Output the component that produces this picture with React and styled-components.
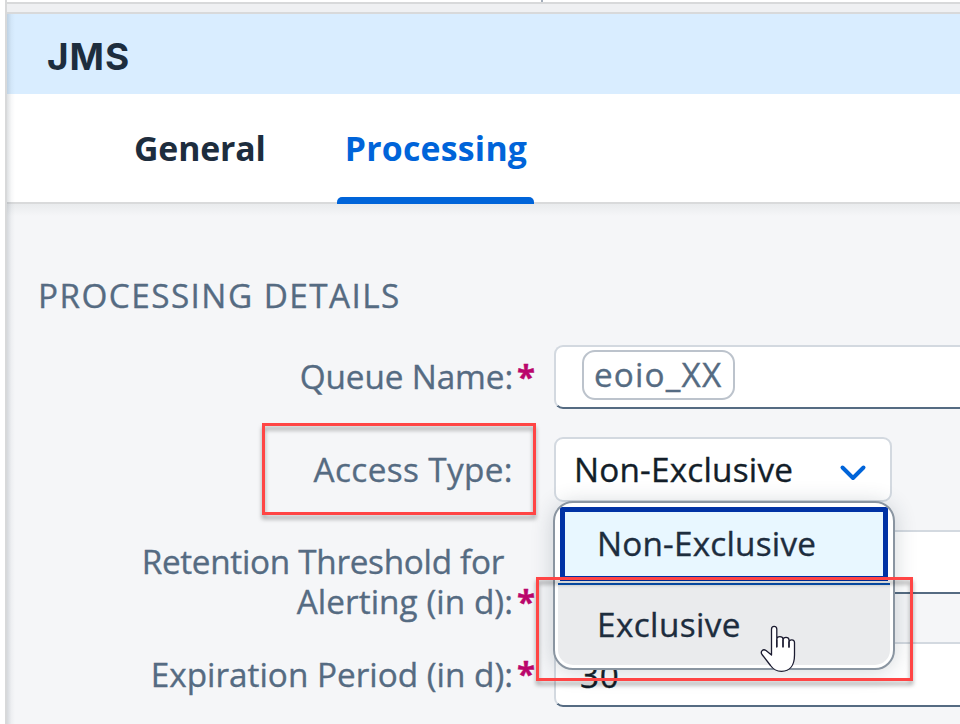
import React from 'react';
import styled, { createGlobalStyle } from 'styled-components';

const GlobalStyle = createGlobalStyle`
  * { box-sizing: border-box; }
  body {
    margin: 0;
    overflow: hidden;
    background: #fff;
    color: #556b82;
    font: 400 33.3px/40px "Open Sans", "Noto Sans", sans-serif;
    -webkit-text-stroke: 0.35px currentColor;
    white-space: nowrap;
  }
`;

const Page = styled.div`
  position: relative;
  display: flex;
  width: 960px;
  height: 724px;
  overflow: hidden;
  background: #fff;
`;

const Gutter = styled.div`
  flex: none;
  width: 7px;
  border-right: 2px solid #d8d9da;
`;

const Panel = styled.main`
  position: relative;
  flex: none;
  width: 953px;
  display: flex;
  flex-direction: column;
  &::before {
    content: '';
    position: absolute;
    z-index: 1;
    inset: 14px auto 0 0;
    width: 8px;
    background: linear-gradient(90deg, rgba(60, 75, 90, 0.17), rgba(60, 75, 90, 0.04) 55%, transparent);
  }
`;

const CanvasEdge = styled.div`
  flex: none;
  height: 2px;
  padding-left: 534px;
  &::before {
    content: '';
    display: block;
    width: 2px;
    height: 2px;
    background: #a3adba;
  }
`;

const Splitter = styled.div`
  flex: none;
  height: 12px;
  border: solid #d8d9da;
  border-width: 2px 0;
  background: #eff0f2;
`;

const TitleBar = styled.header`
  flex: none;
  height: 80px;
  padding: 0 40px;
  background: #d9edff;
`;

const Title = styled.h1`
  margin: 0;
  color: #1d2d3e;
  font: 700 37px/86px Inter, sans-serif;
  letter-spacing: 0.9px;
  -webkit-text-stroke: 0;
`;

const TabBar = styled.nav`
  flex: none;
  display: flex;
  gap: 64px;
  height: 110px;
  padding-left: 119px;
  border-bottom: 2px solid #d9dadb;
  background: #fff;
`;

const Tab = styled.div`
  position: relative;
  height: 108px;
  padding: 0 7px 0 8px;
  font-weight: 700;
  font-size: 33.8px;
  line-height: 109px;
  letter-spacing: ${(p) => p.$spacing}px;
  -webkit-text-stroke: 0;
  color: ${(p) => (p.$active ? '#0064d9' : '#1d2d3e')};
  &::after {
    content: '';
    display: ${(p) => (p.$active ? 'block' : 'none')};
    position: absolute;
    left: 0;
    bottom: -2px;
    width: 197px;
    height: 7px;
    border-radius: 5px 5px 0 0;
    background: #0064d9;
  }
`;

const Body = styled.section`
  flex: 1;
  min-height: 0;
  padding: 71px 0 0 30px;
  background: linear-gradient(#e9ebed, #f5f6f8 12px);
`;

const SectionTitle = styled.h2`
  margin: 0 0 30px;
  padding-left: 1px;
  font: inherit;
  letter-spacing: 1.45px;
`;

const Row = styled.div`
  display: grid;
  grid-template-columns: 476px 41px 1fr;
  align-items: start;
  height: ${(p) => p.$height}px;
`;

const Label = styled.label`
  padding-top: ${(p) => p.$top || 11}px;
  text-align: right;
`;

const Line = styled.span`
  display: block;
  margin-right: ${(p) => p.$end || 0}px;
  letter-spacing: ${(p) => p.$spacing}px;
`;

const Required = styled.span`
  padding: 12px 0 0 4px;
  color: #ba066c;
  font-weight: 700;
  font-size: 33px;
`;

const Field = styled.div`
  display: flex;
  align-items: center;
  height: ${(p) => p.$height || 64}px;
  padding-left: 24px;
  border: 2px solid #d3d9e0;
  border-right: 0;
  border-bottom: 2px solid #556b82;
  border-radius: 9px 0 0 9px;
  background: #fff;
  color: #131e29;
`;

const Token = styled.span`
  width: 153px;
  height: 50px;
  margin: -5px 0 0 2px;
  padding-left: 10px;
  border: 2px solid #bcc3cc;
  border-radius: 13px;
  color: #556b82;
  line-height: 45px;
  letter-spacing: 1.15px;
`;

const Select = styled.div`
  display: flex;
  align-items: center;
  justify-content: space-between;
  width: 338px;
  height: 65px;
  padding: 0 23px 2px 18px;
  border: 2px solid #d3d9e0;
  border-radius: 9px;
  background: #fff;
  color: #131e29;
`;

const Value = styled.span`
  letter-spacing: ${(p) => p.$spacing}px;
`;

const Chevron = styled.svg`
  margin-top: 8px;
`;

const Menu = styled.ul`
  position: absolute;
  left: 553px;
  top: 501px;
  width: 342px;
  height: 169px;
  margin: 0;
  padding: 4px 3px 3px;
  border: 2px solid #8a95a1;
  border-radius: 20px;
  background: #fff;
  box-shadow: 0 2px 22px rgba(34, 53, 72, 0.2);
  list-style: none;
  overflow: hidden;
  color: #1d2d3e;
`;

const Option = styled.li`
  height: ${(p) => (p.$focused ? 74 : 82)}px;
  margin: ${(p) => (p.$focused ? '0 2px 2px' : '0')};
  padding-left: ${(p) => (p.$focused ? 32 : 39)}px;
  border: ${(p) => (p.$focused ? '5px solid #0032a5' : '0')};
  border-top: ${(p) => (p.$focused ? '5px solid #0032a5' : '2px solid #0854b8')};
  border-radius: ${(p) => (p.$focused ? '0' : '0 0 15px 15px')};
  background: ${(p) => (p.$focused ? '#e8f7ff' : '#eaebed')};
  line-height: ${(p) => (p.$focused ? 62 : 78)}px;
  letter-spacing: ${(p) => p.$spacing}px;
`;

const Callout = styled.div`
  position: absolute;
  left: ${(p) => p.$x}px;
  top: ${(p) => p.$y}px;
  width: ${(p) => p.$w}px;
  height: ${(p) => p.$h}px;
  border: 3px solid #ff4545;
  filter: drop-shadow(0 4px 2px rgba(0, 0, 0, 0.34));
`;

const Pointer = styled.svg`
  position: absolute;
  left: 759px;
  top: 624px;
`;

export default function App() {
  return (
    <Page>
      <GlobalStyle />
      <Gutter />
      <Panel>
        <CanvasEdge />
        <Splitter />
        <TitleBar>
          <Title>JMS</Title>
        </TitleBar>
        <TabBar>
          <Tab $spacing={-0.15}>General</Tab>
          <Tab $active $spacing={0.25}>Processing</Tab>
        </TabBar>
        <Body>
          <SectionTitle>PROCESSING DETAILS</SectionTitle>
          <Row $height={92}>
            <Label><Line $spacing={-0.13}>Queue Name:</Line></Label>
            <Required>*</Required>
            <Field><Token>eoio_XX</Token></Field>
          </Row>
          <Row $height={93}>
            <Label $top={12}><Line $spacing={0.38}>Access Type:</Line></Label>
            <span />
            <Select>
              <Value $spacing={0.2}>Non-Exclusive</Value>
              <Chevron width="28" height="20" viewBox="0 0 28 20" fill="none" stroke="#0064d9" strokeWidth="4" strokeLinecap="round" strokeLinejoin="round">
                <path d="M3.5 4.5 14 15 24.5 4.5" />
              </Chevron>
            </Select>
          </Row>
          <Row $height={112}>
            <Label>
              <Line $spacing={-0.3} $end={9}>Retention Threshold for</Line>
              <Line $spacing={0.05}>Alerting (in d):</Line>
            </Label>
            <Required><br />*</Required>
            <Field />
          </Row>
          <Row $height={92}>
            <Label $top={12}><Line $spacing={0}>Expiration Period (in d):</Line></Label>
            <Required>*</Required>
            <Field $height={65}><Value $spacing={0.6}>30</Value></Field>
          </Row>
        </Body>
      </Panel>
      <Menu>
        <Option $focused $spacing={0.2}>Non-Exclusive</Option>
        <Option $spacing={0.4}>Exclusive</Option>
      </Menu>
      <Callout $x={262} $y={423} $w={274} $h={92} />
      <Callout $x={536} $y={577} $w={377} $h={104} />
      <Pointer width="38" height="50" viewBox="0 0 38 50" fill="#fff" stroke="#1b1b30" strokeWidth="1.3" strokeLinejoin="round" strokeLinecap="round">
        <path d="M12.5 31V5.2C12.5 1.3 17.8 1.3 17.8 5.2V22.5 15C18 11.8 23.8 11.8 24 15V22.5 16C24.2 12.6 29.8 12.6 30 16V23 18C30.3 15 35.5 15 35.5 18.5V31C35.5 41 31 47.3 22.5 47.3C17 47.3 14.3 45.5 11.5 41.5L3 30.5C1 27.5 4 24.5 7 26.5Z" />
        <path d="M17.8 16V23M24 16V23M30 18V23" />
      </Pointer>
    </Page>
  );
}
